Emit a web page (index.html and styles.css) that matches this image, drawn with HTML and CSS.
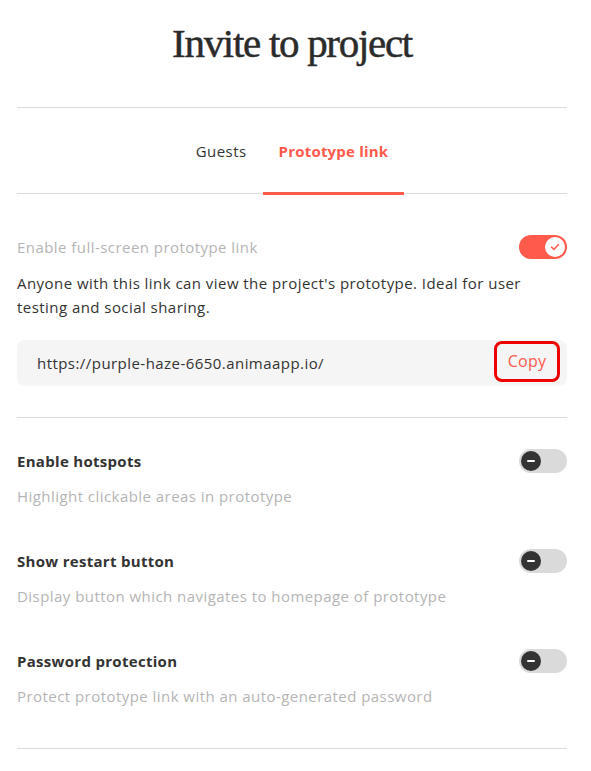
FILE: index.html
```html
<!DOCTYPE html>
<html>
<head>
<meta charset="utf-8">
<link rel="stylesheet" href="styles.css">
</head>
<body>
<div class="panel">
  <h1 class="title">Invite to project</h1>
  <div class="divider"></div>
  <nav class="tabs">
    <div class="tab">Guests</div>
    <div class="tab active">Prototype link</div>
  </nav>
  <div class="fullscreen">
    <div class="row">
      <span class="muted">Enable full-screen prototype link</span>
      <span class="toggle on"><span class="knob"><svg width="10" height="8" viewBox="0 0 10 8"><path d="M1.5 4.2 L4 6.3 L8.5 1.5" fill="none" stroke="#ff5a4c" stroke-width="1.6" stroke-linecap="round" stroke-linejoin="round"/></svg></span></span>
    </div>
    <p class="desc">Anyone with this link can view the project's prototype. Ideal for user testing and social sharing.</p>
    <div class="linkbox">
      <span class="url">https://purple-haze-6650.animaapp.io/</span>
      <button class="copy">Copy</button>
    </div>
  </div>
  <div class="divider"></div>
  <div class="options">
    <div class="option">
      <div class="row">
        <span class="opt-title">Enable hotspots</span>
        <span class="toggle off"><span class="knob"><span class="minus"></span></span></span>
      </div>
      <div class="muted opt-desc">Highlight clickable areas in prototype</div>
    </div>
    <div class="option">
      <div class="row">
        <span class="opt-title">Show restart button</span>
        <span class="toggle off"><span class="knob"><span class="minus"></span></span></span>
      </div>
      <div class="muted opt-desc">Display button which navigates to homepage of prototype</div>
    </div>
    <div class="option">
      <div class="row">
        <span class="opt-title">Password protection</span>
        <span class="toggle off"><span class="knob"><span class="minus"></span></span></span>
      </div>
      <div class="muted opt-desc">Protect prototype link with an auto-generated password</div>
    </div>
  </div>
  <div class="divider"></div>
</div>
</body>
</html>
```

FILE: styles.css
```css
* { box-sizing: border-box; }
html, body { margin: 0; padding: 0; background: #fff; }
body {
  font-family: "Open Sans", "Liberation Sans", sans-serif;
  font-size: 15px;
  letter-spacing: 0.45px;
  color: #333;
}
.panel {
  width: 550px;
  margin-left: 17px;
}
.title {
  margin: 0;
  height: 107px;
  padding-top: 19px;
  text-align: center;
  font-family: "Liberation Serif", serif;
  font-weight: normal;
  font-size: 41px;
  line-height: 48px;
  color: #2b2b2b;
  letter-spacing: -1.3px;
  -webkit-text-stroke: 0.5px #2b2b2b;
}
.divider {
  height: 1px;
  background: #dcdcdc;
}
.tabs {
  display: flex;
  justify-content: center;
  height: 86px;
  border-bottom: 1px solid #dcdcdc;
}
.tab {
  display: flex;
  align-items: center;
  padding: 0 16px;
  font-size: 15px;
  color: #333;
  position: relative;
}
.tab.active {
  color: #ff5a4c;
  font-weight: 700;
  letter-spacing: 0.2px;
}
.tab.active::after {
  content: "";
  position: absolute;
  left: 0;
  right: 0;
  bottom: -2px;
  height: 3px;
  background: #ff5a4c;
}
.fullscreen {
  padding-top: 41px;
  padding-bottom: 31px;
}
.row {
  display: flex;
  justify-content: space-between;
  align-items: center;
  height: 24px;
}
.muted { color: #b5b5b5; }
.desc {
  margin: 12px 0 0;
  line-height: 24px;
  color: #333;
}
.toggle {
  width: 48px;
  height: 24px;
  border-radius: 12px;
  display: flex;
  align-items: center;
  padding: 2px;
  flex-shrink: 0;
}
.toggle.on {
  background: #ff5a4c;
  justify-content: flex-end;
}
.toggle.off {
  background: #dadada;
  justify-content: flex-start;
}
.knob {
  width: 20px;
  height: 20px;
  border-radius: 50%;
  display: flex;
  align-items: center;
  justify-content: center;
}
.toggle.on .knob { background: #fff; }
.toggle.off .knob { background: #333; }
.minus {
  width: 8px;
  height: 2px;
  background: #fff;
  border-radius: 1px;
}
.linkbox {
  margin-top: 21px;
  height: 46px;
  background: #f5f5f5;
  border-radius: 8px;
  display: flex;
  align-items: center;
  justify-content: space-between;
  padding: 0 7px 0 20px;
}
.url { color: #333; }
.copy {
  font-family: inherit;
  font-size: 16px;
  letter-spacing: 0.3px;
  color: #ff5a4c;
  background: transparent;
  border: 3px solid #ee0000;
  border-radius: 8px;
  width: 66px;
  height: 41px;
  margin-top: -4px;
  padding: 0;
}
.options {
  padding-top: 31px;
  padding-bottom: 40px;
}
.option + .option { margin-top: 41px; }
.opt-title {
  font-weight: 700;
  letter-spacing: 0.3px;
  color: #333;
}
.opt-desc {
  margin-top: 11px;
  line-height: 24px;
}
```
